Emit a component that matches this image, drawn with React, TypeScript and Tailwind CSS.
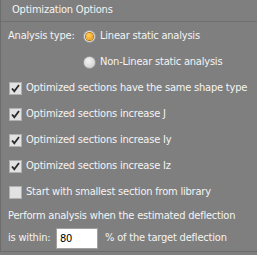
const checks = [
  { label: 'Optimized sections have the same shape type', checked: true },
  { label: 'Optimized sections increase J', checked: true },
  { label: 'Optimized sections increase Iy', checked: true },
  { label: 'Optimized sections increase Iz', checked: true },
  { label: 'Start with smallest section from library', checked: false },
];

function Radio({ on }: { on: boolean }) {
  return (
    <span className="flex h-[13px] w-[13px] shrink-0 items-center justify-center rounded-full border border-[#9a9a9a] bg-[radial-gradient(circle_at_40%_35%,#f4f4f4,#c8c8c8)]">
      {on && <span className="h-[7px] w-[7px] rounded-full bg-[radial-gradient(circle_at_40%_35%,#ffd060,#e89000)] ring-1 ring-[#b87800]" />}
    </span>
  );
}

function Check({ on }: { on: boolean }) {
  return (
    <span className="flex h-[13px] w-[13px] shrink-0 items-center justify-center border border-[#b0b0b0] bg-[#e2e2e2]">
      {on && (
        <svg viewBox="0 0 11 11" className="h-[11px] w-[11px]">
          <path d="M2 5.5 L4.3 8.2 L9 2" fill="none" stroke="#2a2a2a" strokeWidth="1.8" />
        </svg>
      )}
    </span>
  );
}

export default function App() {
  return (
    <div className="h-[255px] w-[257px] bg-[#7f7f7f] font-['DejaVu_Sans_Condensed','DejaVu_Sans',sans-serif] text-[11px] tracking-[-0.2px] text-[#f4f4f4]">
      <div className="flex h-[252px] flex-col border-l border-b border-[#6c6c6c]">
        <div className="flex h-[22px] items-center border-b border-[#707070] px-[11px]">
          Optimization Options
        </div>
        <div className="flex flex-col px-[7px]">
          <div className="mt-[6px] flex h-[16px] items-center">
            <span className="w-[75px]">Analysis type:</span>
            <Radio on />
            <span className="ml-[4px]">Linear static analysis</span>
          </div>
          <div className="mt-[10px] flex h-[16px] items-center pl-[75px]">
            <Radio on={false} />
            <span className="ml-[4px]">Non-Linear static analysis</span>
          </div>
          {checks.map((c) => (
            <div key={c.label} className="mt-[10px] flex h-[16px] items-center pl-[1px]">
              <Check on={c.checked} />
              <span className="ml-[4px] whitespace-nowrap">{c.label}</span>
            </div>
          ))}
          <div className="mt-[8px] h-[16px] whitespace-nowrap">Perform analysis when the estimated deflection</div>
          <div className="mt-[4px] flex items-center">
            <span className="w-[48px]">is within:</span>
            <input
              defaultValue="80"
              className="h-[21px] w-[42px] border border-[#a0a0a0] bg-white px-[3px] text-[11px] text-black outline-none"
            />
            <span className="ml-[7px] whitespace-nowrap">% of the target deflection</span>
          </div>
        </div>
      </div>
    </div>
  );
}
